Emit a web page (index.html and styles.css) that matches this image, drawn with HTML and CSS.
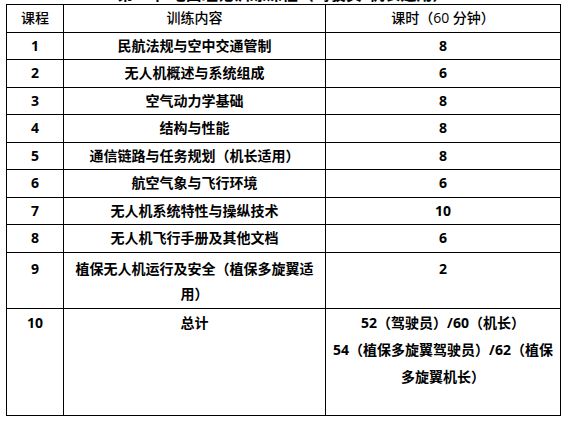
FILE: index.html
```html
<!DOCTYPE html>
<html lang="zh-CN">
<head>
<meta charset="utf-8">
<title>训练课程</title>
<link rel="stylesheet" href="styles.css">
</head>
<body>
<div class="title">第一章 地面理论训练课程（驾驶员/机长适用）</div>
<table class="course">
  <colgroup>
    <col class="c1"><col class="c2"><col class="c3">
  </colgroup>
  <thead>
    <tr><th>课程</th><th>训练内容</th><th>课时（60 分钟）</th></tr>
  </thead>
  <tbody>
    <tr><td>1</td><td>民航法规与空中交通管制</td><td>8</td></tr>
    <tr><td>2</td><td>无人机概述与系统组成</td><td>6</td></tr>
    <tr><td>3</td><td>空气动力学基础</td><td>8</td></tr>
    <tr><td>4</td><td>结构与性能</td><td>8</td></tr>
    <tr><td>5</td><td>通信链路与任务规划（机长适用）</td><td>8</td></tr>
    <tr><td>6</td><td>航空气象与飞行环境</td><td>6</td></tr>
    <tr><td>7</td><td>无人机系统特性与操纵技术</td><td>10</td></tr>
    <tr><td>8</td><td>无人机飞行手册及其他文档</td><td>6</td></tr>
    <tr class="tall"><td>9</td><td><span class="nw">植保无人机运行及安全（植保多旋翼适</span><br><span class="nw">用）</span></td><td>2</td></tr>
    <tr class="total"><td>10</td><td>总计</td><td><span class="nw">52（驾驶员）/60（机长）</span><br><span class="nw">54（植保多旋翼驾驶员）/62（植保</span><br><span class="nw">多旋翼机长）</span></td></tr>
  </tbody>
</table>
</body>
</html>
```

FILE: styles.css
```css
html, body {
  margin: 0;
  padding: 0;
  background: #fff;
}
body {
  padding-left: 6px;
  font-family: "Open Sans", "Noto Sans CJK SC", sans-serif;
  color: #000;
}
.title {
  width: 554px;
  margin-top: -17px;
  height: 21px;
  line-height: 22px;
  font-size: 16px;
  font-weight: 700;
  text-align: center;
  overflow: hidden;
}
.course {
  border-collapse: collapse;
  width: 554px;
  table-layout: fixed;
  font-size: 14px;
}
.c1 { width: 57px; }
.c2 { width: 262px; }
.c3 { width: 235px; }
.course th, .course td {
  border: 1px solid #000;
  padding: 0 6px;
  height: 26.5px;
  line-height: 26px;
  text-align: center;
  vertical-align: middle;
}
.course th {
  font-weight: 500;
}
.course td {
  font-weight: 700;
}
.nw { white-space: nowrap; }
.course tr.tall td {
  height: 52px;
  line-height: 25px;
  vertical-align: top;
  padding-top: 3px;
}
.course tr.total td {
  height: 107px;
  line-height: 27px;
  vertical-align: top;
  padding-top: 0;
  box-sizing: border-box;
}
```
